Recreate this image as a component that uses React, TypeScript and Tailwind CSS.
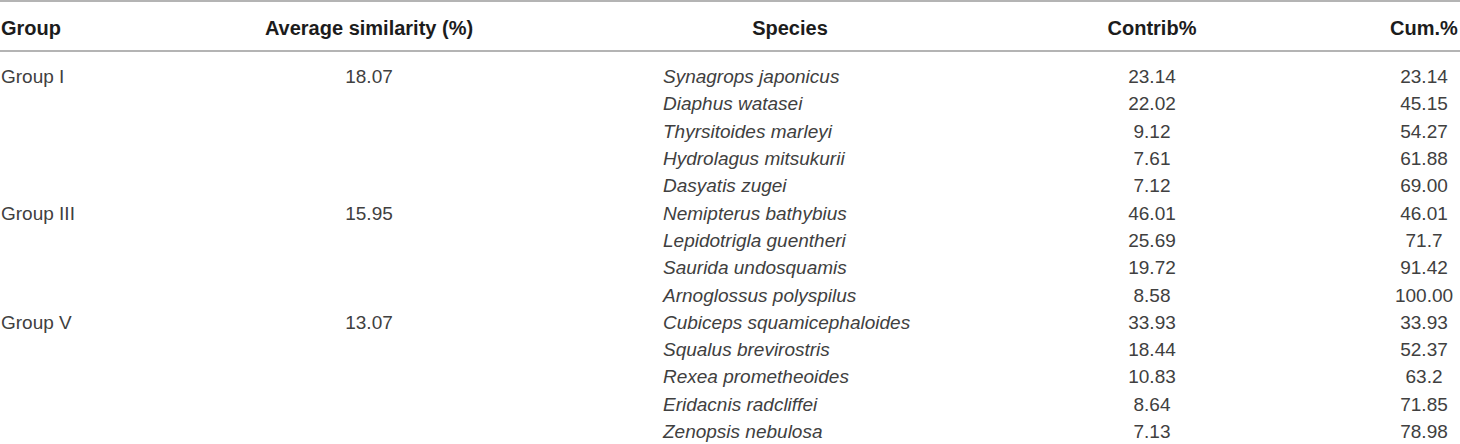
import React from "react";

type Row = {
  group?: string;
  avg?: string;
  species: string;
  contrib: string;
  cum: string;
};

const rows: Row[] = [
  { group: "Group I", avg: "18.07", species: "Synagrops japonicus", contrib: "23.14", cum: "23.14" },
  { species: "Diaphus watasei", contrib: "22.02", cum: "45.15" },
  { species: "Thyrsitoides marleyi", contrib: "9.12", cum: "54.27" },
  { species: "Hydrolagus mitsukurii", contrib: "7.61", cum: "61.88" },
  { species: "Dasyatis zugei", contrib: "7.12", cum: "69.00" },
  { group: "Group III", avg: "15.95", species: "Nemipterus bathybius", contrib: "46.01", cum: "46.01" },
  { species: "Lepidotrigla guentheri", contrib: "25.69", cum: "71.7" },
  { species: "Saurida undosquamis", contrib: "19.72", cum: "91.42" },
  { species: "Arnoglossus polyspilus", contrib: "8.58", cum: "100.00" },
  { group: "Group V", avg: "13.07", species: "Cubiceps squamicephaloides", contrib: "33.93", cum: "33.93" },
  { species: "Squalus brevirostris", contrib: "18.44", cum: "52.37" },
  { species: "Rexea prometheoides", contrib: "10.83", cum: "63.2" },
  { species: "Eridacnis radcliffei", contrib: "8.64", cum: "71.85" },
  { species: "Zenopsis nebulosa", contrib: "7.13", cum: "78.98" },
];

const cols = "grid grid-cols-[250px_238px_429px_347px_196px]";

export default function App() {
  return (
    <div className="w-[1460px] h-[444px] overflow-hidden bg-white font-['Liberation_Sans',Arial,sans-serif] text-[19px]">
      {/* header */}
      <div className={`${cols} h-[52px] items-center pt-[3px] border-y-2 border-[#b4b4b4] font-bold text-[20px] text-[#1c1c1c]`}>
        <div className="pl-px">Group</div>
        <div className="text-center">Average similarity (%)</div>
        <div className="pl-[175px] text-center">Species</div>
        <div className="pl-[123px] text-center">Contrib%</div>
        <div className="pl-[124px] text-center">Cum.%</div>
      </div>

      {/* body */}
      <div className="pt-[11px] text-[#404040]">
        {rows.map((r, i) => (
          <div key={i} className={`${cols} h-[27.3px] items-center leading-none`}>
            <div className="pl-px">{r.group}</div>
            <div className="text-center">{r.avg}</div>
            <div className="pl-[175px] italic">{r.species}</div>
            <div className="pl-[123px] text-center">{r.contrib}</div>
            <div className="pl-[124px] text-center">{r.cum}</div>
          </div>
        ))}
      </div>
    </div>
  );
}
